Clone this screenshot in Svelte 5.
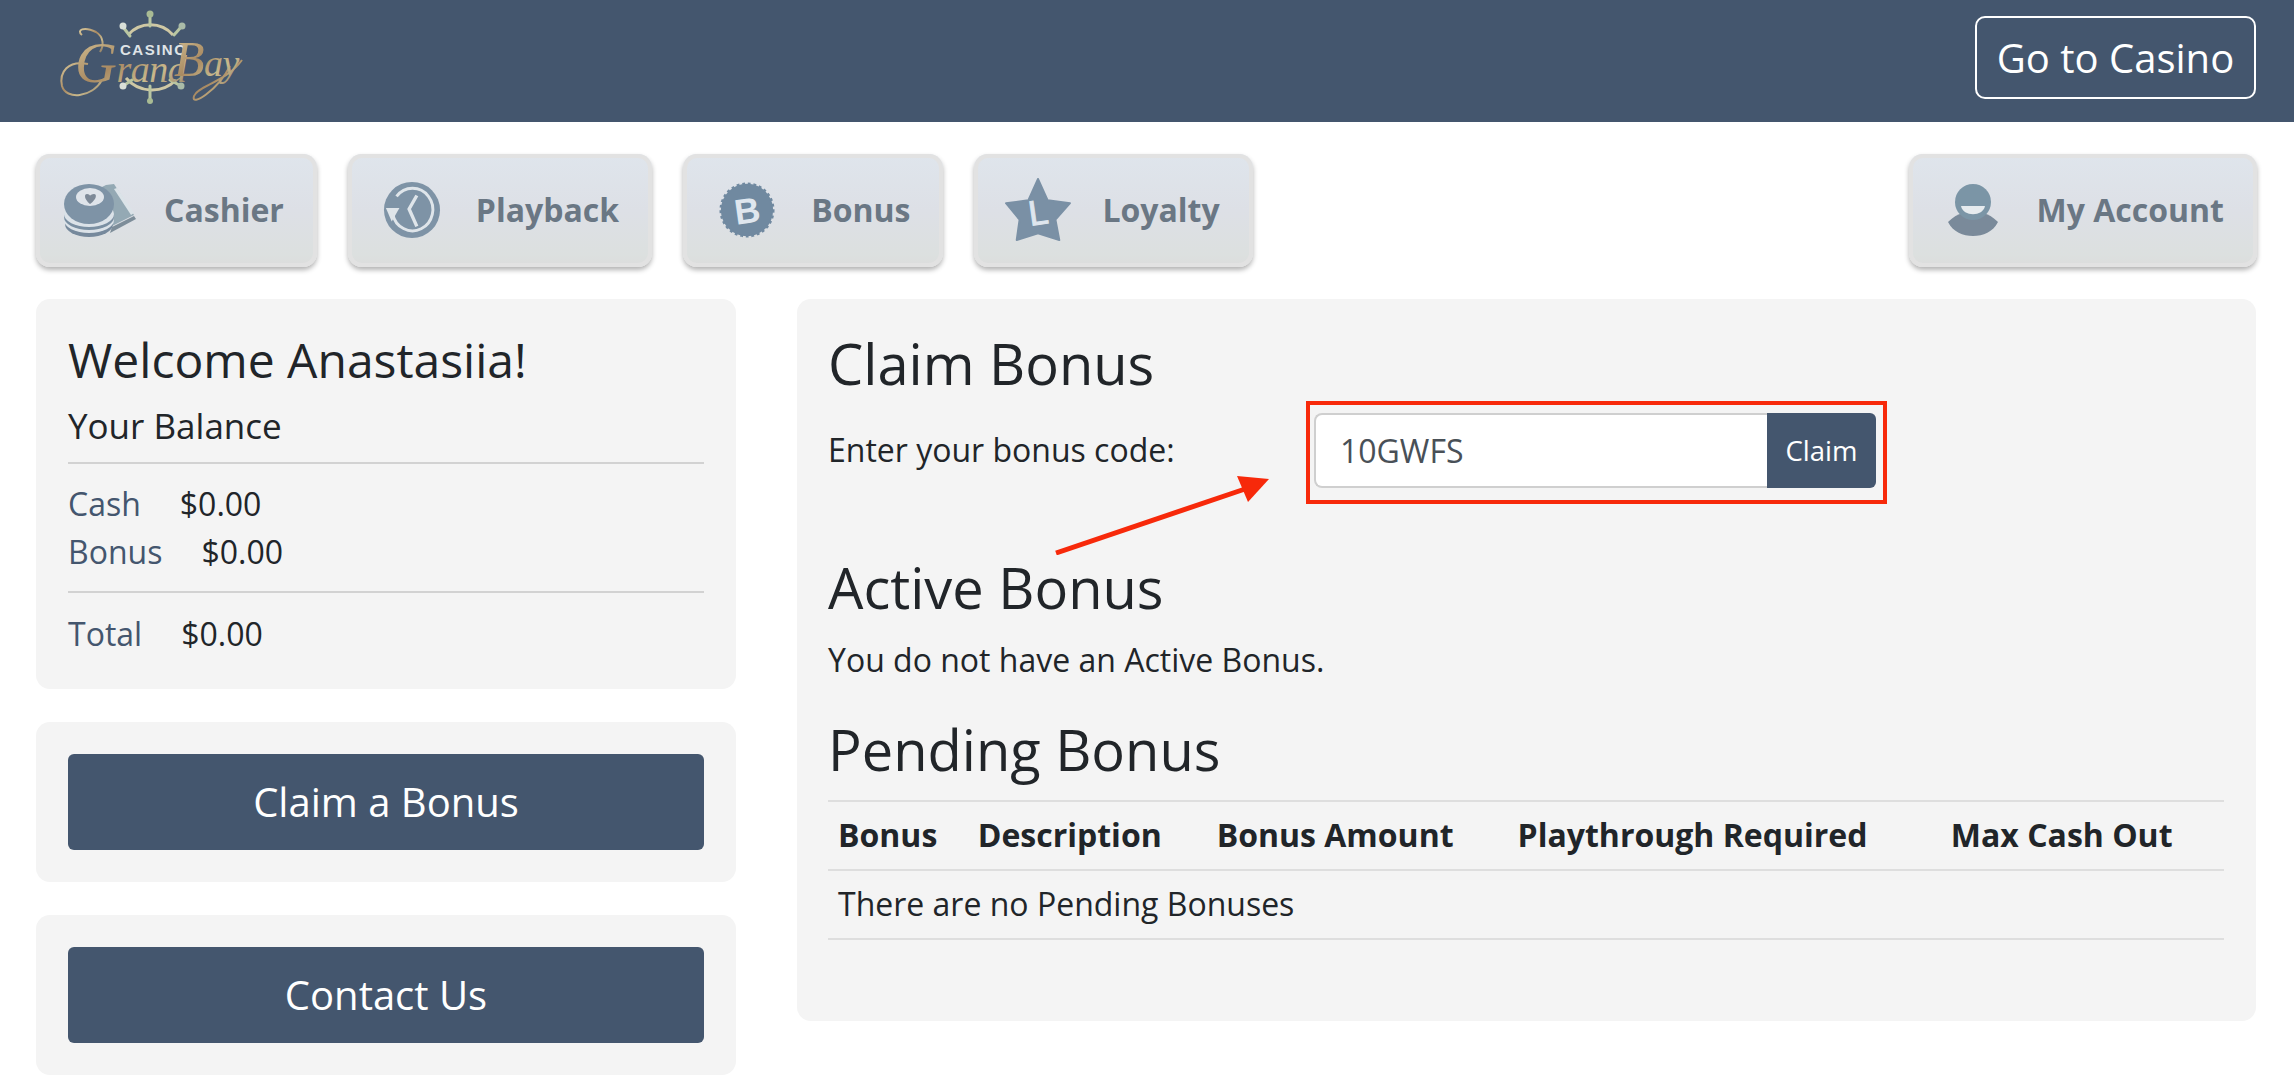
<script lang="ts">
	const balances = [
		{ label: 'Cash', value: '$0.00' },
		{ label: 'Bonus', value: '$0.00' }
	];
	const columns = ['Bonus', 'Description', 'Bonus Amount', 'Playthrough Required', 'Max Cash Out'];
	let code = $state('10GWFS');
</script>

<header class="topbar">
	<svg class="logo" width="196" height="96" viewBox="0 0 196 96" role="img" aria-label="Casino Grand Bay">
		<defs>
			<linearGradient id="gold" x1="0" y1="0" x2="1" y2="1">
				<stop offset="0" stop-color="#d8c79a" />
				<stop offset="0.45" stop-color="#a98a62" />
				<stop offset="0.7" stop-color="#c9b98d" />
				<stop offset="1" stop-color="#8f7c63" />
			</linearGradient>
		</defs>
		<!-- ship's wheel behind the wordmark -->
		<g fill="none" stroke="#cfc8a4" stroke-width="3">
			<path d="M70 25 A30 30 0 0 1 115 25" />
			<path d="M68 68 A34 34 0 0 0 118 70" />
		</g>
		<g stroke="#b9c6a2" stroke-width="3" stroke-linecap="round">
			<path d="M92 3 V16" />
			<path d="M92 76 V91" />
			<path d="M65 17 L72 26" />
			<path d="M124 16 L116 25" />
			<path d="M65 76 L74 70" />
			<path d="M123 76 L112 70" />
		</g>
		<circle cx="92" cy="4" r="3.5" fill="#a9bb94" />
		<circle cx="65" cy="16" r="3.5" fill="#d9dfd8" />
		<circle cx="124" cy="16" r="3.5" fill="#a9bba8" />
		<circle cx="65" cy="76" r="3.5" fill="#d9dfd8" />
		<circle cx="123" cy="76" r="3.5" fill="#a9bba8" />
		<circle cx="92" cy="91" r="3" fill="#a9bb94" />
		<!-- flourishes around the script -->
		<g fill="none" stroke="url(#gold)" stroke-width="2">
			<path d="M24 25 C18 20 26 16 38 22 C46 27 46 36 42 42" />
			<path d="M30 54 C10 50 1 62 4 76 C8 90 34 88 44 70" />
			<path d="M172 56 C160 80 132 98 136 86 C140 76 168 72 184 50" />
		</g>
		<text x="62" y="45" class="logo-casino">CASINO</text>
		<text x="17" y="72" class="logo-script"><tspan class="cap">G</tspan>rand</text>
		<text x="116" y="66" class="logo-script"><tspan class="cap-b">B</tspan>ay</text>
	</svg>
	<a class="casino-link" href="#casino">Go to Casino</a>
</header>

<nav class="tabs">
	<a class="tab" href="#cashier">
		<span class="tab-icon">
			<svg width="72" height="54" viewBox="0 0 72 54">
				<path d="M36 5 L42 2 L50 1 L70 32 L46 44 Z" fill="#94a9b4" />
				<path d="M50 6 L53 5 L70 30 L67 32 Z" fill="#dbe3e8" />
				<path d="M48 44 L70 33 L72 36 L46 50 Z" fill="#7d8d99" />
				<ellipse cx="25" cy="41" rx="24" ry="13" fill="#76899c" />
				<ellipse cx="25" cy="37" rx="25" ry="13" fill="#dbe2e8" />
				<ellipse cx="25" cy="34" rx="25" ry="13" fill="#7a8fa2" />
				<ellipse cx="25" cy="31" rx="25" ry="13" fill="#dbe2e8" />
				<ellipse cx="25" cy="21" rx="25" ry="20" fill="#7e93a6" />
				<ellipse cx="26" cy="14" rx="14" ry="9" fill="#dfe4ea" />
				<path d="M26 21 C20 16 20 11 23 11 C25 11 26 12 26 13 C26 12 28 11 30 11 C33 11 33 16 26 21 Z" fill="#7e8a98" />
			</svg>
		</span>
		<span>Cashier</span>
	</a>
	<a class="tab" href="#playback">
		<span class="tab-icon">
			<svg width="58" height="58" viewBox="0 0 60 60">
				<circle cx="30" cy="30" r="29" fill="#7e93a6" />
				<path d="M10 34 A21 22 0 1 0 14 16" fill="none" stroke="#dfe5ea" stroke-width="3" />
				<path d="M3 28 L17 28 L9 42 Z" fill="#dfe5ea" />
				<path d="M35 15 L27 29 L35 47" fill="none" stroke="#dfe5ea" stroke-width="3.5" />
			</svg>
		</span>
		<span>Playback</span>
	</a>
	<a class="tab" href="#bonus">
		<span class="tab-icon">
			<svg width="56" height="58" viewBox="0 0 60 60">
				<circle cx="30" cy="30" r="28" fill="#7089a0" stroke="#7089a0" stroke-width="3" stroke-dasharray="3 3" />
				<text x="30" y="44" class="icon-letter" transform="rotate(-8 30 30)">B</text>
			</svg>
		</span>
		<span>Bonus</span>
	</a>
	<a class="tab" href="#loyalty">
		<span class="tab-icon">
			<svg width="66" height="64" viewBox="0 0 68 66">
				<path d="M34 1 L44 23 L67 26 L52 43 L56 64 L34 57 L12 64 L15 43 L1 26 L24 23 Z" fill="#7a90a5" stroke="#7a90a5" stroke-width="2" stroke-linejoin="round" />
				<text x="34" y="48" class="icon-letter thin" transform="rotate(-8 34 34)">L</text>
			</svg>
		</span>
		<span>Loyalty</span>
	</a>
	<a class="tab account" href="#account">
		<span class="tab-icon">
			<svg width="50" height="52" viewBox="0 0 50 52">
				<path d="M0 38 C5 33 10 30 15 29 H35 C40 30 45 33 50 38 C45 48 35 52 25 52 C15 52 5 48 0 38 Z" fill="#7a8a9a" />
				<circle cx="25" cy="18" r="18" fill="#7b95a6" />
				<path d="M13 22 H37 C35 33 15 33 13 22 Z" fill="#e6ebee" />
			</svg>
		</span>
		<span>My Account</span>
	</a>
</nav>

<main class="layout">
	<aside class="side">
		<section class="card balance">
			<h2>Welcome Anastasiia!</h2>
			<h3>Your Balance</h3>
			<div class="rows">
				{#each balances as row}
					<div class="row"><span class="key">{row.label}</span><span>{row.value}</span></div>
				{/each}
			</div>
			<div class="row total"><span class="key">Total</span><span>$0.00</span></div>
		</section>
		<section class="card action"><a class="primary" href="#claim">Claim a Bonus</a></section>
		<section class="card action"><a class="primary" href="#contact">Contact Us</a></section>
	</aside>

	<section class="card content">
		<h1>Claim Bonus</h1>
		<form class="claim" onsubmit={(e) => e.preventDefault()}>
			<label for="code">Enter your bonus code:</label>
			<div class="highlight">
				<input id="code" bind:value={code} />
				<button type="submit">Claim</button>
			</div>
			<!-- annotation drawn over the form -->
			<svg class="arrow" width="216" height="80" viewBox="0 0 216 80">
				<path d="M1 78 L190 14" stroke="#f7290a" stroke-width="5" fill="none" />
				<path d="M214 4 L182 1 L193 27 Z" fill="#f7290a" />
			</svg>
		</form>

		<h1 class="active-title">Active Bonus</h1>
		<p>You do not have an Active Bonus.</p>

		<h1 class="pending-title">Pending Bonus</h1>
		<table>
			<thead>
				<tr>
					{#each columns as col}
						<th>{col}</th>
					{/each}
				</tr>
			</thead>
			<tbody>
				<tr><td colspan="5">There are no Pending Bonuses</td></tr>
			</tbody>
		</table>
	</section>
</main>

<style>
	:global(body) {
		margin: 0;
		background: #fff;
		color: #212529;
		font-family: 'Open Sans', 'Noto Sans', sans-serif;
	}
	a {
		text-decoration: none;
	}
	.topbar {
		height: 122px;
		box-sizing: border-box;
		background: #44566e;
		display: flex;
		align-items: flex-start;
		justify-content: space-between;
		padding: 16px 38px 0 58px;
	}
	.logo {
		display: block;
		margin-top: -6px;
	}
	.logo-casino {
		font: 700 15px 'Liberation Sans', sans-serif;
		fill: #dfe3e6;
		letter-spacing: 1.5px;
	}
	.logo-script {
		font: italic 400 38px 'Liberation Serif', serif;
		fill: url(#gold);
		letter-spacing: -0.5px;
	}
	.cap {
		font-size: 58px;
	}
	.cap-b {
		font-size: 50px;
	}
	.casino-link {
		box-sizing: border-box;
		width: 281px;
		height: 83px;
		border: 2px solid #fff;
		border-radius: 10px;
		color: #fff;
		font-size: 40px;
		display: flex;
		align-items: center;
		justify-content: center;
	}
	.tabs {
		display: flex;
		gap: 31px;
		padding: 32px 37px 0 36px;
	}
	.tab {
		box-sizing: border-box;
		height: 113px;
		display: flex;
		align-items: center;
		padding: 0 33px 2px 0;
		border-radius: 14px;
		background: linear-gradient(#dfe5ec 0%, #dde0e6 50%, #dce0df 90%, #dcdcdc 100%);
		box-shadow: 0 3px 5px rgba(0, 0, 0, 0.3), inset 0 0 0 4px #e2e2e2;
		color: #6a7784;
		font-size: 32px;
		font-weight: 700;
	}
	.tab-icon {
		width: 128px;
		flex: none;
		display: flex;
		justify-content: center;
	}
	.tab svg {
		display: block;
	}
	.account {
		margin-left: auto;
	}
	.icon-letter {
		font: 700 38px 'Liberation Sans', sans-serif;
		fill: #dfe6ee;
		text-anchor: middle;
	}
	.icon-letter.thin {
		font-weight: 400;
		font-size: 36px;
		stroke: #dfe6ee;
		stroke-width: 1;
	}
	.layout {
		display: flex;
		align-items: flex-start;
		gap: 61px;
		padding: 32px 38px 17px 36px;
	}
	.side {
		width: 700px;
		flex: none;
		display: flex;
		flex-direction: column;
		gap: 33px;
	}
	.card {
		background: #f4f4f4;
		border-radius: 14px;
		box-sizing: border-box;
	}
	.balance {
		height: 390px;
		padding: 29px 32px 0;
	}
	.balance h2 {
		margin: 0;
		font-size: 48px;
		font-weight: 400;
		line-height: 64px;
	}
	.balance h3 {
		margin: 0;
		padding: 10px 0 12px;
		font-size: 35px;
		font-weight: 400;
		line-height: 48px;
		border-bottom: 2px solid #d2d2d2;
	}
	.rows {
		padding: 16px 0 15px;
		border-bottom: 2px solid #d2d2d2;
	}
	.row {
		display: flex;
		gap: 39px;
		font-size: 32px;
		line-height: 48px;
	}
	.total {
		padding-top: 17px;
	}
	.key {
		color: #44566e;
	}
	.action {
		padding: 32px;
	}
	.primary {
		height: 96px;
		border-radius: 6px;
		background: #44566e;
		color: #fff;
		font-size: 40px;
		padding-bottom: 2px;
		box-sizing: border-box;
		display: flex;
		align-items: center;
		justify-content: center;
	}
	.content {
		flex: 1;
		height: 722px;
		padding: 28px 32px 0 31px;
	}
	h1 {
		margin: 0;
		font-size: 56px;
		font-weight: 400;
		line-height: 72px;
	}
	.claim {
		position: relative;
		display: flex;
		align-items: center;
		margin-top: 2px;
	}
	.claim label {
		width: 478px;
		font-size: 32px;
		margin-top: -6px;
	}
	.highlight {
		width: 581px;
		height: 103px;
		box-sizing: border-box;
		border: 4px solid #f7290a;
		padding: 8px 7px 12px 4px;
		display: flex;
	}
	input {
		flex: 1;
		min-width: 0;
		box-sizing: border-box;
		border: 2px solid #cfcfcf;
		border-right: 0;
		border-radius: 8px 0 0 8px;
		background: #fff;
		color: #495057;
		padding: 0 24px;
		font: 400 32px 'Open Sans', sans-serif;
	}
	button {
		width: 109px;
		border: 0;
		border-radius: 0 6px 6px 0;
		background: #44566e;
		color: #fff;
		font: 400 27.5px 'Open Sans', sans-serif;
	}
	.arrow {
		position: absolute;
		left: 227px;
		top: 74px;
	}
	.active-title {
		margin-top: 47px;
	}
	p {
		margin: 13px 0 0;
		font-size: 32px;
		line-height: 48px;
	}
	.pending-title {
		margin-top: 29px;
	}
	table {
		width: 100%;
		border-collapse: collapse;
		margin-top: 15px;
		font-size: 32px;
	}
	th {
		text-align: left;
		font-weight: 700;
		padding: 0 10px 2px;
		height: 65px;
		border-top: 2px solid #dedede;
		border-bottom: 2px solid #dedede;
		white-space: nowrap;
	}
	td {
		padding: 0 10px 2px;
		height: 65px;
		border-bottom: 2px solid #dedede;
	}
</style>
